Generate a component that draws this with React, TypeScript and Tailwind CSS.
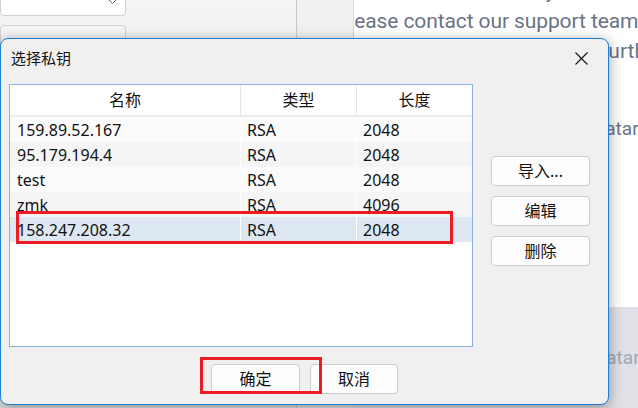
import React from "react";

type KeyRow = { name: string; type: string; length: string };

const keys: KeyRow[] = [
  { name: "159.89.52.167", type: "RSA", length: "2048" },
  { name: "95.179.194.4", type: "RSA", length: "2048" },
  { name: "test", type: "RSA", length: "2048" },
  { name: "zmk", type: "RSA", length: "4096" },
  { name: "158.247.208.32", type: "RSA", length: "2048" },
];

const SELECTED = 4;

function Chevron() {
  return (
    <svg width="11" height="6" viewBox="0 0 11 6" fill="none">
      <path d="M0.5 0.5 L5.5 5.5 L10.5 0.5" stroke="#5f5f5f" strokeWidth="1" />
    </svg>
  );
}

function CloseIcon() {
  return (
    <svg width="13" height="13" viewBox="0 0 13 13" fill="none">
      <path d="M0.5 0.5 L12.5 12.5 M12.5 0.5 L0.5 12.5" stroke="#111" strokeWidth="1.1" />
    </svg>
  );
}

function WinButton({ label, w }: { label: string; w: string }) {
  return (
    <div
      className={`${w} h-[30px] bg-[#fdfdfd] border border-[#cccccc] rounded-[4px] flex items-center justify-center text-[16px] text-[#111] leading-none`}
    >
      {label}
    </div>
  );
}

function KeyTable() {
  return (
    <div className="w-[464px] h-[263px] bg-white border border-[#86b3e2] flex flex-col">
      <div className="h-[32px] shrink-0 flex border-b-2 border-[#ececec] bg-white text-[16px] text-[#111]">
        <div className="w-[231px] border-r border-[#e6e6e6] flex items-center justify-center">名称</div>
        <div className="w-[116px] border-r border-[#e6e6e6] flex items-center justify-center">类型</div>
        <div className="flex-1 flex items-center justify-center">长度</div>
      </div>
      {keys.map((k, i) => {
        const bg =
          i === SELECTED ? "bg-[#dde8f3]" : i % 2 === 0 ? "bg-[#fbfbfb]" : "bg-[#f5f5f5]";
        return (
          <div key={k.name} className={`h-[25px] shrink-0 flex items-center text-[16px] text-[#111] ${bg}`}>
            <div className="w-[231px] h-full border-r border-white pl-[7px] flex items-center">{k.name}</div>
            <div className="w-[116px] h-full border-r border-white pl-[6px] flex items-center">{k.type}</div>
            <div className="flex-1 h-full pl-[6px] flex items-center">{k.length}</div>
          </div>
        );
      })}
    </div>
  );
}

export default function App() {
  return (
    <div className="relative w-[638px] h-[408px] overflow-hidden flex bg-white font-['Noto_Sans','Noto_Sans_CJK_SC',sans-serif]">
      {/* settings sidebar */}
      <div className="w-[297px] shrink-0 border-r border-[#c9c9c9] bg-gradient-to-b from-[#f4f4f4] to-[#e4e4e4] flex flex-col gap-[9px]">
        <div className="w-[126px] h-[33px] -mt-[17px] bg-white border border-[#d0d0d0] rounded-[4px] flex items-end justify-end pr-[7px] pb-[11px]">
          <Chevron />
        </div>
        <div className="w-[126px] h-[44px] bg-gradient-to-b from-[#f6f6f6] to-[#ececec] border border-[#d0d0d0] rounded-[4px]" />
      </div>
      <div className="w-[57px] shrink-0 border-r border-[#dadada] bg-gradient-to-b from-[#f1f1f1] to-[#e6e6e6]" />

      {/* page content */}
      <div className="flex-1 min-w-0 overflow-hidden flex flex-col font-['Roboto',sans-serif] leading-[30px] whitespace-nowrap">
        <div className="h-[307px] bg-white text-[#6b7385] text-[21px] flex flex-col">
          <div className="-mt-[24px] flex">
            <span className="w-[170px] shrink-0 overflow-hidden">Contact the admin to reset the</span>
            <span>key</span>
          </div>
          <div className="-ml-[18px] tracking-[-0.1px]">Please contact our support team and we will get back to you.</div>
          <div className="flex">
            <span className="w-[247px] shrink-0 overflow-hidden">We are always glad to help with any</span>
            <span>further questions.</span>
          </div>
          <div className="mt-[48px] flex text-[19px]">
            <span className="w-[232px] shrink-0 overflow-hidden">Click the picture to change your</span>
            <span>avatar.</span>
          </div>
        </div>
        <div className="flex-1 bg-[#dfe1e6] text-[#a3a7b1] text-[19px] pt-[36px] flex">
          <span className="w-[233px] shrink-0 overflow-hidden">Click the picture to change your</span>
          <span>avatar.</span>
        </div>
      </div>

      {/* key chooser dialog */}
      <div className="absolute left-0 top-[38px] w-[609px] h-[367px] bg-[#f0f0f0] border border-[#1c7ed6] rounded-[8px] shadow-[0_3px_14px_rgba(0,0,0,0.38)] flex flex-col">
        <div className="h-[38px] shrink-0 flex items-center justify-between pl-[10px] pr-[20px]">
          <span className="text-[15px] text-[#111]">选择私钥</span>
          <CloseIcon />
        </div>
        <div className="flex pl-[8px] pt-[7px]">
          <KeyTable />
          <div className="ml-[18px] pt-[72px] flex flex-col gap-[10px]">
            <WinButton label="导入..." w="w-[99px]" />
            <WinButton label="编辑" w="w-[99px]" />
            <WinButton label="删除" w="w-[99px]" />
          </div>
        </div>
        <div className="mt-[17px] flex justify-center gap-[10px]">
          <WinButton label="确定" w="w-[89px]" />
          <WinButton label="取消" w="w-[88px]" />
        </div>
      </div>

      {/* red highlight marks */}
      <div className="absolute left-[16px] top-[211px] w-[437px] h-[33px] border-[3px] border-[#ed1c24]" />
      <div className="absolute left-[200px] top-[357px] w-[122px] h-[37px] border-[3px] border-[#ed1c24]" />
    </div>
  );
}
